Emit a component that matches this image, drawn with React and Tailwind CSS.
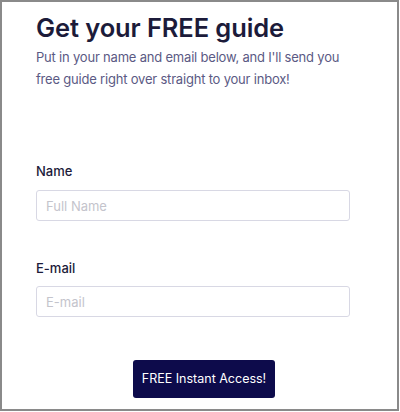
export default function App() {
  return (
    <div className="w-[400px] h-[412px] bg-white" style={{ fontFamily: "Inter, 'Noto Sans', sans-serif" }}>
      <div className="w-[399px] h-[411px] border-2 border-[#8a8a8a] box-border pl-[34px] pr-[47px] pt-[10px]">
        <h1 className="text-[25.5px] leading-[32px] font-semibold text-[#1c1b3a] tracking-[-0.1px]">Get your FREE guide</h1>
        <p className="mt-[2px] text-[13px] leading-[22px] text-[#5b5a84] tracking-[-0.2px]">
          Put in your name and email below, and I'll send you free guide right over straight to your inbox!
        </p>
        <div className="mt-[72px]">
          <label className="block text-[13px] leading-[18px] font-medium text-[#1c1b3a]">Name</label>
          <input
            className="mt-[10px] w-full h-[31px] border border-[#d8d8e4] rounded-[3px] px-[9px] text-[13px] text-[#1c1b3a] placeholder:text-[#c4c4cc] outline-none"
            placeholder="Full Name"
          />
        </div>
        <div className="mt-[38px]">
          <label className="block text-[13px] leading-[18px] font-medium text-[#1c1b3a]">E-mail</label>
          <input
            className="mt-[9px] w-full h-[31px] border border-[#d8d8e4] rounded-[3px] px-[9px] text-[13px] text-[#1c1b3a] placeholder:text-[#c4c4cc] outline-none"
            placeholder="E-mail"
          />
        </div>
        <div className="mt-[43px] flex">
          <button className="ml-[97px] w-[142px] h-[38px] bg-[#0d0b4b] rounded-[3px] text-white text-[12.5px]">FREE Instant Access!</button>
        </div>
      </div>
    </div>
  );
}
